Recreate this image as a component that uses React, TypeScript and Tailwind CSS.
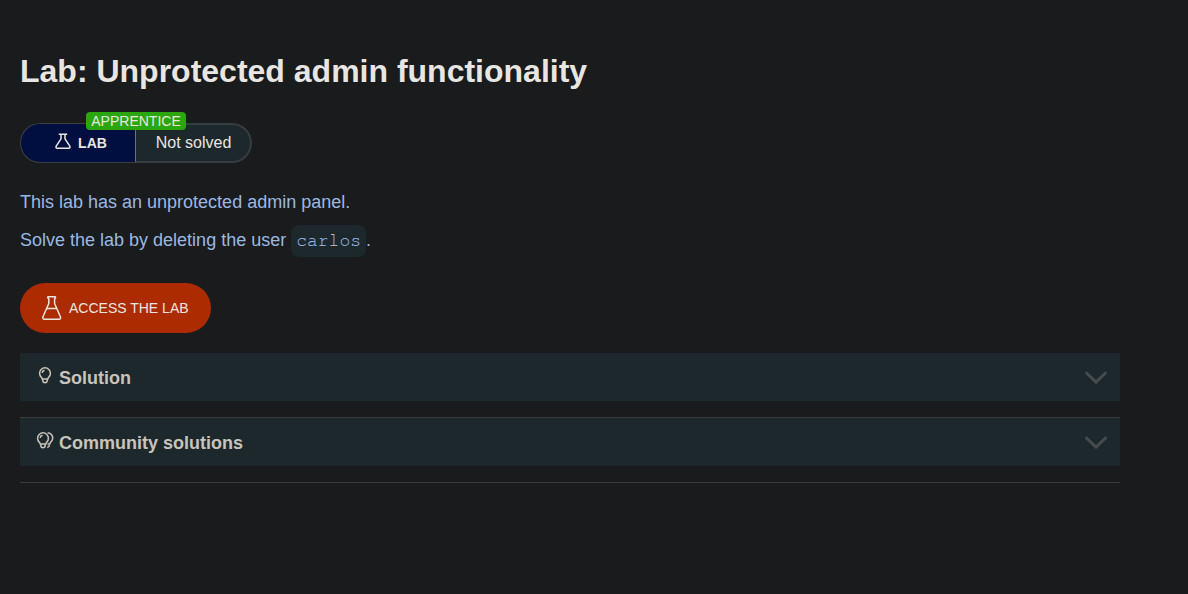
import type { ReactNode } from "react";

function SmallFlask() {
  return (
    <svg className="h-4 w-4" viewBox="0 0 16 16" fill="none" stroke="currentColor" strokeWidth="1.5" aria-hidden="true">
      <path d="M3.8 1.2H12.2M6 1.2V5.8L1.2 13.2Q0.4 15.2 2.3 15.2H13.7Q15.6 15.2 14.8 13.2L10 5.8V1.2" />
    </svg>
  );
}

function LargeFlask() {
  return (
    <svg className="h-[26px] w-5" viewBox="0 0 20 26" fill="none" stroke="currentColor" strokeWidth="1.5" strokeLinejoin="round" aria-hidden="true">
      <path d="M6 1.7H13.2Q14.2 3 12.6 3.6V8.5L18.4 21.8Q19 24.3 17 24.3H2.5Q0.4 24.3 1 21.8L6.8 8.5V3.6Q5 3 6 1.7ZM4.8 13.5H14.6" />
    </svg>
  );
}

function Bulb() {
  return (
    <svg className="h-[18px] w-[18px]" viewBox="0 0 18 18" fill="none" stroke="currentColor" strokeWidth="1.5" aria-hidden="true">
      <path d="M6.2 12.9Q6.2 12 5.2 11.1A5.4 5.4 0 1 1 12.8 11.1Q11.8 12 11.8 12.9ZM6.8 13V15Q7.1 16.7 9 16.7T11.2 15V13M6.1 6.9Q6.5 4.8 8.5 4.3" />
    </svg>
  );
}

function DoubleBulb() {
  return (
    <svg className="h-[18px] w-[18px]" viewBox="0 0 18 18" fill="none" stroke="currentColor" strokeWidth="1.5" aria-hidden="true">
      <path d="M4.2 12.9Q4.2 12 3.2 11.1A5.4 5.4 0 1 1 10.8 11.1Q9.8 12 9.8 12.9ZM4.8 13V15Q5.1 16.7 7 16.7T9.2 15V13M4.1 6.9Q4.5 4.8 6.5 4.3" />
      <path d="M11.6 1.7C15.4 2.1 17.3 5.2 16.6 8C16 10.4 14.1 11.1 13.8 12.9H11.5M13.4 14Q13.3 16.2 11.2 16.6" />
    </svg>
  );
}

function Chevron() {
  return (
    <svg className="h-4 w-6" viewBox="0 0 24 16" fill="none" stroke="#464c4e" strokeWidth="3" strokeLinecap="round" aria-hidden="true">
      <path d="M2.5 4L12 13.2L21.5 4" />
    </svg>
  );
}

function Disclosure({ icon, title }: { icon: ReactNode; title: string }) {
  return (
    <details className="bg-[#1d282c] text-[#c8c3bc]">
      <summary className="flex h-12 cursor-pointer list-none items-center pr-3 pl-4">
        <span className="pb-1">{icon}</span>
        <span className="ml-[5px] flex-1 pt-0.5 text-lg font-bold">{title}</span>
        <Chevron />
      </summary>
    </details>
  );
}

export default function App() {
  return (
    <div className="min-h-screen bg-[#1a1b1c] px-5 pt-[51px] font-['Liberation_Sans',Arial,sans-serif] text-[#e8e6e3]">
      <main className="max-w-[1100px]">
        <h1 className="text-[32px] leading-10 font-bold">Lab: Unprotected admin functionality</h1>

        <div className="relative mt-8 flex h-10 w-[232px]">
          <div className="flex flex-1 items-center justify-center gap-[7px] rounded-l-full border border-r-0 border-[#3a4042] bg-[#000e40] pl-1.5 text-sm font-bold">
            <span className="pb-1">
              <SmallFlask />
            </span>
            <span>LAB</span>
          </div>
          <div className="flex w-[117px] items-center justify-center rounded-r-full border-2 border-l border-[#353d40] border-l-[#74706a] bg-[#1d282c] pl-px text-base">
            Not solved
          </div>
          <span className="absolute -top-[11px] left-[66px] h-[18px] w-[100px] rounded bg-[#2ba60c] text-center text-sm leading-[18px]">
            APPRENTICE
          </span>
        </div>

        <div className="mt-[23px] text-lg leading-8 text-[#9bb8e3]">
          <p>This lab has an unprotected admin panel.</p>
          <p className="mt-1.5 flex items-start">
            <span>Solve the lab by deleting the user</span>
            <code className="mt-px ml-[5px] rounded-lg bg-[#1d282c] px-[5px] font-['Courier_10_Pitch','Nimbus_Mono_PS','Nimbus_Mono_L',FreeMono,'Courier_Prime','Liberation_Mono',monospace] text-lg leading-8 text-[#a3c3f0]">carlos</code>
            <span>.</span>
          </p>
        </div>

        <a href="#lab" className="mt-[26px] flex h-[50px] w-fit items-center gap-[7px] rounded-full bg-[#ac2b00] px-[22px] text-sm">
          <LargeFlask />
          <span>ACCESS THE LAB</span>
        </a>

        <div className="mt-5">
          <Disclosure icon={<Bulb />} title="Solution" />
          <hr className="mt-4 border-[#393c3e]" />
          <Disclosure icon={<DoubleBulb />} title="Community solutions" />
          <hr className="mt-4 border-[#393c3e]" />
        </div>
      </main>
    </div>
  );
}
